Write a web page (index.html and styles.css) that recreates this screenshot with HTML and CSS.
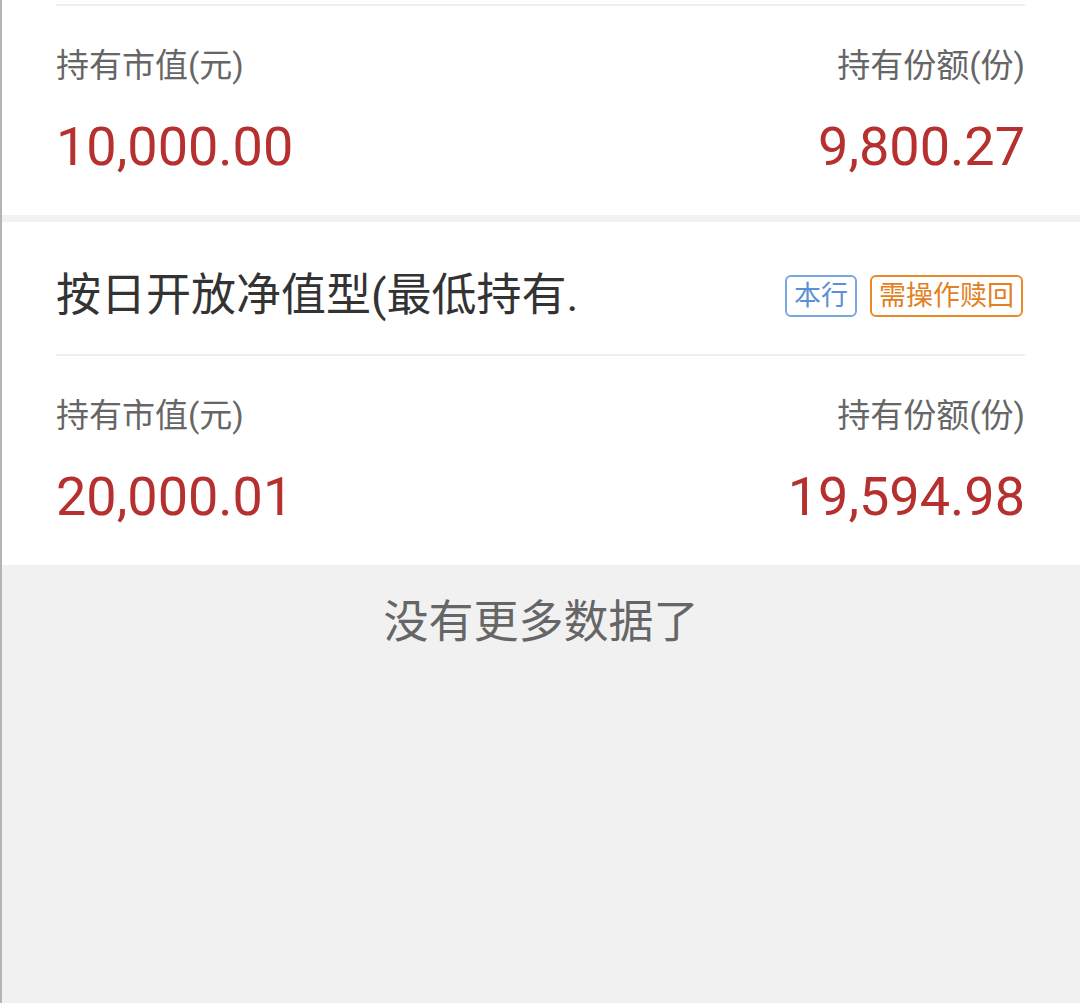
FILE: index.html
```html
<!DOCTYPE html>
<html lang="zh-CN">
<head>
    <meta charset="UTF-8">
    <meta name="viewport" content="width=device-width, initial-scale=1.0">
    <title>我的持仓</title>
    <link rel="stylesheet" href="styles.css">
</head>
<body>
    <div class="page">
        <div class="card">
            <div class="card-body">
                <div class="row label-row">
                    <span>持有市值(元)</span>
                    <span>持有份额(份)</span>
                </div>
                <div class="row value-row">
                    <span>10,000.00</span>
                    <span>9,800.27</span>
                </div>
            </div>
        </div>
        <div class="card">
            <div class="card-head">
                <span class="title">按日开放净值型(最低持有.</span>
                <div class="tags">
                    <span class="tag tag-blue">本行</span>
                    <span class="tag tag-orange">需操作赎回</span>
                </div>
            </div>
            <div class="card-body">
                <div class="row label-row">
                    <span>持有市值(元)</span>
                    <span>持有份额(份)</span>
                </div>
                <div class="row value-row">
                    <span>20,000.01</span>
                    <span>19,594.98</span>
                </div>
            </div>
        </div>
        <div class="no-more">没有更多数据了</div>
    </div>
</body>
</html>
```
FILE: styles.css
```css
html, body {
    margin: 0;
    height: 100%;
}
body {
    font-family: Roboto, "Noto Sans CJK SC", sans-serif;
    background-color: #f1f1f1;
}
.page {
    min-height: 100%;
    border-left: 2px solid #b4b4b4;
    box-sizing: border-box;
}
.card {
    background: #fff;
    padding: 4px 55px 0 54px;
    margin-bottom: 7px;
}
.card + .card {
    padding-top: 0;
    margin-bottom: 0;
}
.card-head {
    display: flex;
    align-items: center;
    justify-content: space-between;
    padding: 44px 0 28px;
}
.title {
    font-size: 45px;
    line-height: 60px;
    color: #333;
}
.tags {
    display: flex;
    gap: 13px;
    margin-right: 2px;
}
.tag {
    font-size: 27px;
    line-height: 38px;
    padding: 0 7px;
    border: 2px solid;
    border-radius: 6px;
}
.tag-blue {
    color: #5d8fd6;
    border-color: #7aa6e2;
}
.tag-orange {
    color: #e3801f;
    border-color: #e8892a;
}
.card-body {
    border-top: 2px solid #eeeeee;
    padding: 40px 0 38px;
}
.row {
    display: flex;
    justify-content: space-between;
}
.label-row {
    font-size: 33px;
    line-height: 40px;
    color: #666;
}
.value-row {
    margin-top: 31px;
    font-size: 54px;
    line-height: 60px;
    color: #b5302f;
}
.no-more {
    text-align: center;
    font-size: 45px;
    line-height: 60px;
    color: #666;
    padding-top: 28px;
}
```
